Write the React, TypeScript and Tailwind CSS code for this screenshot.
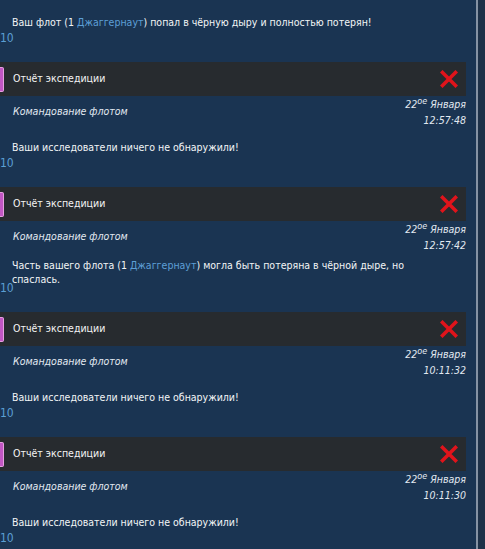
import React from 'react'

type Report = {
  time: string
  body: React.ReactNode
}

const FONT = "font-['DejaVu_Sans_Condensed','DejaVu_Sans',sans-serif]"

const ship = <span className="text-[#5d9fd6]">Джаггернаут</span>

const REPORTS: Report[] = [
  { time: '12:57:48', body: 'Ваши исследователи ничего не обнаружили!' },
  {
    time: '12:57:42',
    body: (
      <>
        Часть вашего флота (1 {ship}) могла быть потеряна в чёрной дыре, но спаслась.
      </>
    ),
  },
  { time: '10:11:32', body: 'Ваши исследователи ничего не обнаружили!' },
  { time: '10:11:30', body: 'Ваши исследователи ничего не обнаружили!' },
]

function CloseIcon() {
  return (
    <svg width="18" height="18" viewBox="0 0 18 18">
      <path d="M2.5 2.5 L15.5 15.5 M15.5 2.5 L2.5 15.5" stroke="#e0141b" strokeWidth="3.6" strokeLinecap="square" />
    </svg>
  )
}

// message text + the little "10" under it
function MessageBody({ children }: { children: React.ReactNode }) {
  return (
    <>
      <div className="h-[30px] pt-[10px] flex items-center">
        <p className="pl-3 pr-[40px] text-[10.5px] leading-[14px] text-[#f2f4f6]">{children}</p>
      </div>
      <div className="text-[12px] leading-[12px] text-[#5a9fd4] mb-[18px]">10</div>
    </>
  )
}

function ReportBlock({ report }: { report: Report }) {
  return (
    <div>
      <div className="h-[34px] bg-[#272b2f] flex items-center">
        <div className="w-[4px] h-[25px] rounded-r-[2px] bg-[#c257c4] border border-l-0 border-[#e6a0e0]" />
        <span className="ml-[9px] text-[10.5px] text-[#f4f4f4] flex-1">Отчёт экспедиции</span>
        <span className="mr-[8px] flex">
          <CloseIcon />
        </span>
      </div>
      <div className="h-[31px] pt-[1px] flex items-center justify-between italic text-[10.5px] text-[#e2e9f1]">
        <span className="pl-[13px]">Командование флотом</span>
        <div className="text-right leading-[15px]">
          <div>
            22<span className="relative -top-[4px] text-[9px]">ое</span> Января
          </div>
          <div>{report.time}</div>
        </div>
      </div>
      <MessageBody>{report.body}</MessageBody>
    </div>
  )
}

export default function App() {
  return (
    <div className={`${FONT} w-[485px] h-[549px] overflow-hidden bg-[#1a3452] flex`}>
      <div className="w-[466px]">
        <div className="h-[2px]" />
        <MessageBody>
          Ваш флот (1 {ship}) попал в чёрную дыру и полностью потерян!
        </MessageBody>
        {REPORTS.map((r, i) => (
          <ReportBlock key={i} report={r} />
        ))}
      </div>
      <div className="flex-1 flex justify-end">
        <div className="w-[2px] bg-[#8592a3]" />
        <div className="w-[7px] bg-[#1e3148]" />
      </div>
    </div>
  )
}
